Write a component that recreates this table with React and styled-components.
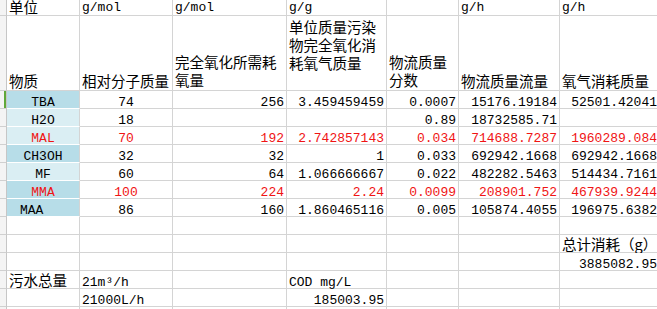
import styled, { createGlobalStyle, css } from "styled-components";

const GlobalStyle = createGlobalStyle`
  body {
    margin: 0;
    background: #ffffff;
    overflow: hidden;
  }
`;

const COLUMNS = "7px 73px 93px 114px 100px 72px 101px 100px";
const GRID = "#d4d4d4";

const fills = {
  dark: "#b7dde8",
  light: "#daeef3",
};

const Sheet = styled.div`
  display: flex;
  flex-direction: column;
  width: max-content;
  height: 309px;
  overflow: hidden;
`;

const Row = styled.div`
  display: grid;
  grid-template-columns: ${COLUMNS};
  height: ${(p) => p.$h || 18}px;
  flex: 0 0 auto;
`;

const Gutter = styled.div`
  background: #f4f4f4;
  border-right: 1px solid #c6c6c6;
  border-bottom: 1px solid #d0d0d0;
  box-sizing: border-box;
  ${(p) =>
    p.$active &&
    css`
      box-shadow: inset -2px 0 0 #5fa83a;
    `}
`;

const latin = css`
  font-family: "Liberation Mono", "Noto Sans CJK SC", monospace;
  font-size: 13px;
  line-height: 11px;
`;

const cjk = css`
  font-family: "Noto Sans CJK SC", sans-serif;
  font-size: 14.5px;
  line-height: 17px;
`;

const Cell = styled.div`
  box-sizing: border-box;
  display: flex;
  min-width: 0;
  align-items: ${(p) => (p.$top ? "flex-start" : "flex-end")};
  justify-content: ${(p) =>
    p.$align === "right" ? "flex-end" : p.$align === "center" ? "center" : "flex-start"};
  text-align: ${(p) => p.$align || "left"};
  padding: ${(p) => (p.$top ? "2px" : "0")} 2px ${(p) => p.$pb || 0}px
    ${(p) => p.$indent || 2}px;
  border-right: 1px solid ${GRID};
  border-bottom: 1px solid ${(p) => (p.$fill ? "#ffffff" : GRID)};
  background: ${(p) => (p.$fill ? fills[p.$fill] : "#ffffff")};
  color: ${(p) => (p.$red ? "#f01414" : "#000000")};
  white-space: ${(p) => (p.$wrap ? "normal" : "nowrap")};
  ${(p) => (p.$cjk ? cjk : latin)}
  ${(p) =>
    p.$wrap &&
    css`
      line-height: 18px;
    `}
  ${(p) =>
    p.$tight &&
    css`
      line-height: 14px;
    `}
`;

const substances = [
  { name: "TBA", fill: "dark", values: ["74", "256", "3.459459459", "0.0007", "15176.19184", "52501.42041"] },
  { name: "H2O", fill: "light", values: ["18", "", "", "0.89", "18732585.71", ""] },
  { name: "MAL", fill: "light", red: true, values: ["70", "192", "2.742857143", "0.034", "714688.7287", "1960289.084"] },
  { name: "CH3OH", fill: "dark", values: ["32", "32", "1", "0.033", "692942.1668", "692942.1668"] },
  { name: "MF", fill: "light", values: ["60", "64", "1.066666667", "0.022", "482282.5463", "514434.7161"] },
  { name: "MMA", fill: "dark", red: true, values: ["100", "224", "2.24", "0.0099", "208901.752", "467939.9244"] },
  { name: "MAA", fill: "dark", indent: 13, values: ["86", "160", "1.860465116", "0.005", "105874.4055", "196975.6382"] },
];

const units = ["g/mol", "g/mol", "g/g", "", "g/h", "g/h"];

const App = () => {
  return (
    <>
      <GlobalStyle />
      <Sheet>
        <Row $h={16}>
          <Gutter />
          <Cell $cjk $tight $pb={1}>单位</Cell>
          {units.map((u, i) => (
            <Cell key={i} $pb={2}>{u}</Cell>
          ))}
        </Row>

        <Row $h={75}>
          <Gutter />
          <Cell $cjk $pb={1}>物质</Cell>
          <Cell $cjk $pb={1}>相对分子质量</Cell>
          <Cell $cjk $wrap $pb={1}>完全氧化所需耗氧量</Cell>
          <Cell $cjk $wrap $top>单位质量污染物完全氧化消耗氧气质量</Cell>
          <Cell $cjk $wrap $pb={1}>物流质量分数</Cell>
          <Cell $cjk $pb={1}>物流质量流量</Cell>
          <Cell $cjk $pb={1}>氧气消耗质量</Cell>
        </Row>

        {substances.map((s, r) => (
          <Row key={s.name}>
            <Gutter $active={r === 0} />
            <Cell
              $fill={s.fill}
              $red={s.red}
              $align={s.indent ? "left" : "center"}
              $indent={s.indent}
            >
              {s.name}
            </Cell>
            {s.values.map((v, i) => (
              <Cell key={i} $red={s.red} $align={i === 0 ? "center" : "right"}>
                {v}
              </Cell>
            ))}
          </Row>
        ))}

        <Row>
          <Gutter />
          <Cell /><Cell /><Cell /><Cell /><Cell /><Cell /><Cell />
        </Row>

        <Row>
          <Gutter />
          <Cell /><Cell /><Cell /><Cell /><Cell /><Cell />
          <Cell $cjk>总计消耗（g）</Cell>
        </Row>

        <Row>
          <Gutter />
          <Cell /><Cell /><Cell /><Cell /><Cell /><Cell />
          <Cell $align="right">3885082.95</Cell>
        </Row>

        <Row>
          <Gutter />
          <Cell $cjk>污水总量</Cell>
          <Cell>21m³/h</Cell>
          <Cell />
          <Cell>COD mg/L</Cell>
          <Cell /><Cell /><Cell />
        </Row>

        <Row>
          <Gutter />
          <Cell />
          <Cell>21000L/h</Cell>
          <Cell />
          <Cell $align="right">185003.95</Cell>
          <Cell /><Cell /><Cell />
        </Row>

        <Row>
          <Gutter />
          <Cell /><Cell /><Cell /><Cell /><Cell /><Cell /><Cell />
        </Row>
      </Sheet>
    </>
  );
};

export default App;
